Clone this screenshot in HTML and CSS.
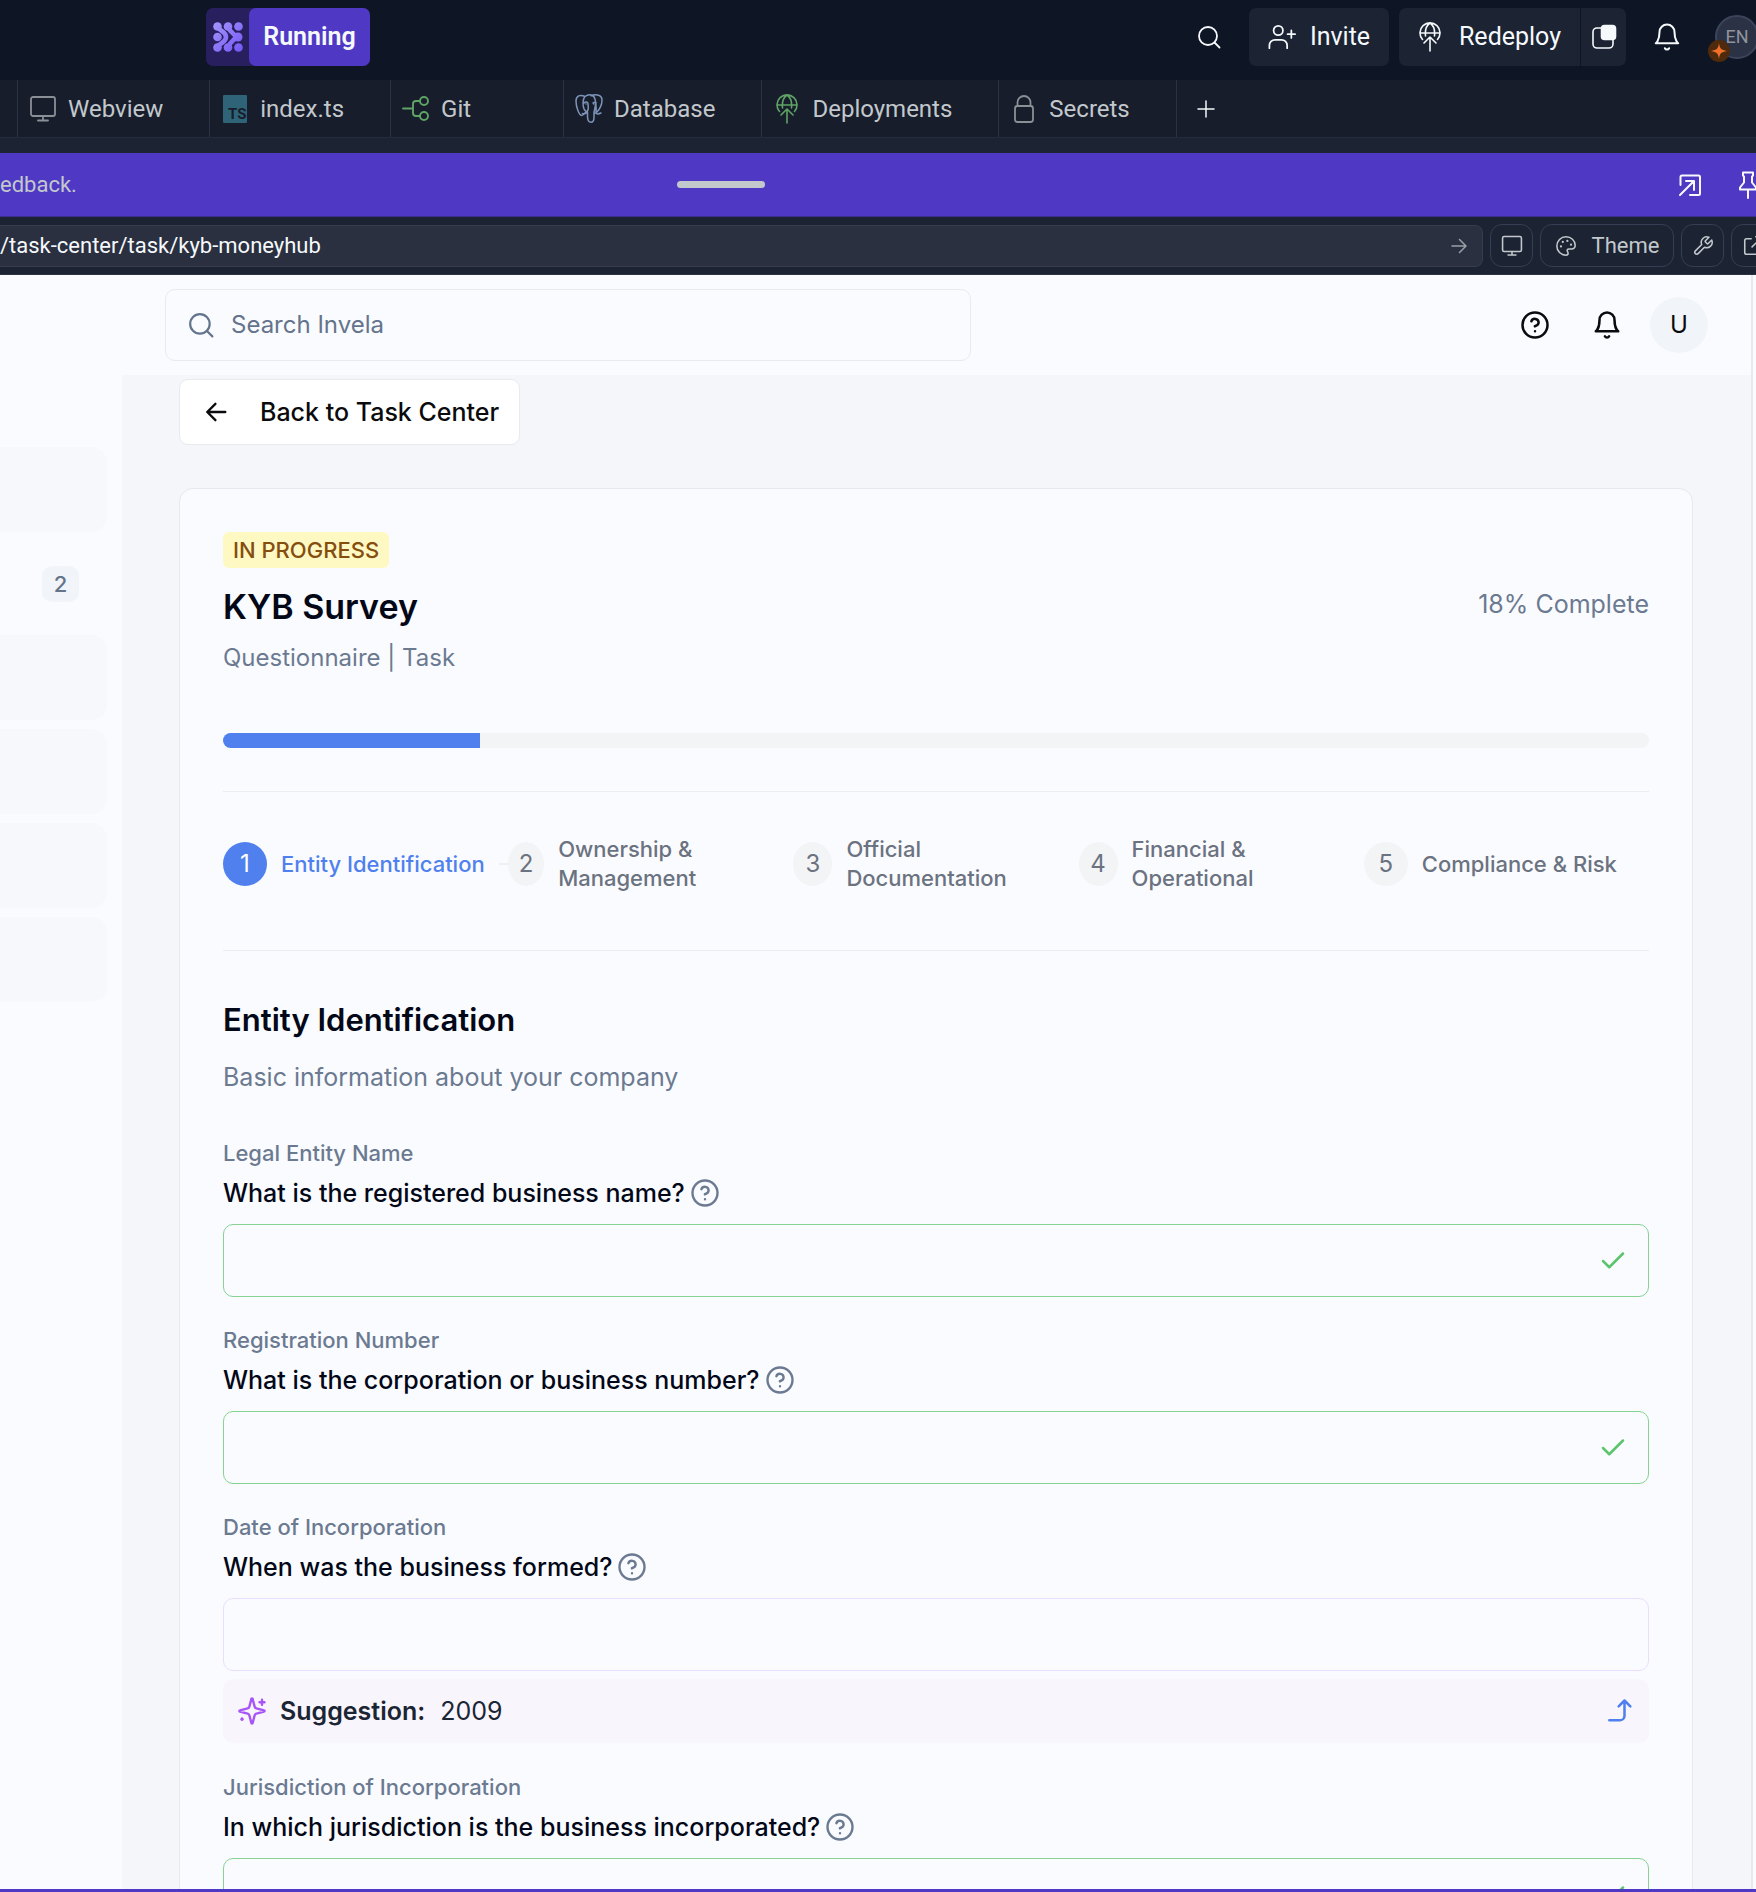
FILE: index.html
```html
<!DOCTYPE html>
<html lang="en">
<head>
<meta charset="utf-8">
<title>KYB Survey</title>
<link rel="stylesheet" href="styles.css">
</head>
<body>
<svg class="sprite" aria-hidden="true">
  <symbol id="i-search" viewBox="0 0 24 24"><circle cx="11" cy="11" r="9"/><path d="m17.5 17.5 5 5"/></symbol>
  <symbol id="i-help" viewBox="0 0 24 24"><circle cx="12" cy="12" r="10"/><path d="M9.1 9a3 3 0 0 1 5.8 1c0 2-3 3-3 3M12 17h.01"/></symbol>
  <symbol id="i-bell" viewBox="0 0 24 24"><path d="M6 8a6 6 0 0 1 12 0c0 7 3 9 3 9H3s3-2 3-9M10.3 21a1.9 1.9 0 0 0 3.4 0"/></symbol>
  <symbol id="i-monitor" viewBox="0 0 28 28"><rect x="2" y="2" width="24" height="19" rx="2"/><path d="M14 21v4.500M9 25.500h10"/></symbol>
  <symbol id="i-globe" viewBox="0 0 24 30"><path d="M4.500 17.500A10 10 0 1 1 19.500 17.500M2 11h20M12 1C7.500 4 7 9 7.500 14M12 1c4.500 3 5 8 4.500 13M12 29V15M6 21l6-6 6 6"/></symbol>
  <symbol id="i-check" viewBox="0 0 24 24"><path d="M20 6 9 17l-5-5"/></symbol>
</svg>
<div class="app">
  <header class="topbar">
    <button class="run" type="button">
      <span class="run-logo"><svg viewBox="0 0 30 30" width="30" height="30"><defs><linearGradient id="lg" gradientUnits="userSpaceOnUse" x1="0" y1="0" x2="30" y2="30"><stop offset="0" stop-color="#a596fb"/><stop offset="1" stop-color="#7355f6"/></linearGradient></defs><g fill="url(#lg)"><circle cx="4.500" cy="4.500" r="4.300"/><circle cx="15" cy="4.500" r="4.300"/><circle cx="25.500" cy="4.500" r="4.300"/><circle cx="4.500" cy="15" r="4.300"/><circle cx="25" cy="15" r="4.500"/><circle cx="4.500" cy="25.500" r="4.300"/><circle cx="15" cy="25.500" r="4.300"/><circle cx="25.500" cy="25.500" r="4.300"/></g><g fill="none" stroke="url(#lg)" stroke-width="4.600" stroke-linejoin="round"><path d="M5 5.500C8 10 13 9.500 13 15S8 20 5 24.500"/><path d="M15.500 5.500C17.500 11 20 10 23 15 20 20 17.500 19 15.500 24.500"/></g></svg></span>
      <span class="run-label">Running</span>
    </button>
    <div class="top-actions">
      <button class="icon-btn" type="button" aria-label="Search"><svg class="ic" width="24" height="24" stroke-width="1.800"><use href="#i-search"/></svg></button>
      <button class="top-btn invite" type="button"><svg class="ic" viewBox="0 0 30 28" width="28" height="28" stroke-width="1.900"><circle cx="11" cy="7" r="5"/><path d="M1.500 26v-3a6 6 0 0 1 6-6h7a6 6 0 0 1 6 6v3M25 7v8M21 11h8"/></svg>Invite</button>
      <div class="split">
        <button class="top-btn" type="button"><svg class="ic" width="24" height="30" stroke-width="1.600"><use href="#i-globe"/></svg>Redeploy</button>
        <button class="top-btn pages" type="button" aria-label="Deployment panel"><svg class="ic" viewBox="0 0 26 26" width="26" height="26" stroke-width="1.600"><path d="M10 4H6a4 4 0 0 0-4 4v12a4 4 0 0 0 4 4h12a4 4 0 0 0 4-4v-4"/><rect x="10.500" y="1.500" width="14" height="14" rx="3" fill="currentColor"/></svg></button>
      </div>
      <button class="icon-btn bell" type="button" aria-label="Notifications"><svg class="ic" width="30" height="30" stroke-width="1.600"><use href="#i-bell"/></svg></button>
      <div class="user"><span class="user-pic">EN</span><span class="user-star"><svg viewBox="0 0 16 16" width="16" height="16" fill="#f0702b"><path d="M8 0c.8 5.500 2 7 8 8-6 1-7.200 2.500-8 8-.8-5.500-2-7-8-8 6-1 7.200-2.500 8-8z"/></svg></span></div>
    </div>
  </header>

  <nav class="tabs" aria-label="Workspace tabs">
    <span class="tab-edge"></span>
    <button class="tab" type="button"><svg class="ic gray" width="28" height="28" stroke-width="1.800"><use href="#i-monitor"/></svg>Webview</button>
    <button class="tab" type="button"><svg viewBox="0 0 28 28" width="28" height="28"><rect x="2" y="0" width="24" height="28" rx="1" fill="#2f6478"/><text x="7" y="24" class="ts">TS</text></svg>index.ts</button>
    <button class="tab" type="button"><svg class="ic green" viewBox="0 0 28 28" width="28" height="28" stroke-width="1.900"><circle cx="22" cy="6" r="4"/><circle cx="22" cy="21" r="4"/><path d="M1 13.500h10M18 6h-4a3 3 0 0 0-3 3v9a3 3 0 0 0 3 3h4"/></svg>Git</button>
    <button class="tab" type="button"><svg class="ic slate" viewBox="0 0 28 30" width="28" height="30" stroke-width="1.500"><path d="M10 2.500C5 0 1 2 1 7c0 6 3 14 5.500 14.500 1.500 0 4-3 4-3M10 2.500c4-3 9-2 10 2.500 1.500 5 0 9-1 13v5c0 7-6 7-6.500 0v-5C9 17 8 13 8 9c0-3 .5-5 2-6.500zM16 1.800c5-2 11-1 11 4.200 0 5-3 10-5.500 12.500M20 19c2 1.500 4 1 6 0M9 9c2-2 4-1 4 1s1 4-.5 7c-1 3-3.500 3-5 2.500M18 9c1-1 2-1 3-.5-.5 3 .5 5 0 9M11 10h.01M18.500 10h.01"/></svg>Database</button>
    <button class="tab" type="button"><svg class="ic green" width="28" height="30" stroke-width="1.600"><use href="#i-globe"/></svg>Deployments</button>
    <button class="tab" type="button"><svg class="ic gray" viewBox="0 0 28 30" width="28" height="30" stroke-width="1.800"><rect x="5" y="12" width="18" height="16" rx="2.500"/><path d="M7.500 12V8.500a6.500 6.500 0 0 1 13 0V12"/></svg>Secrets</button>
    <button class="tab-add" type="button" aria-label="New tab"><svg class="ic" viewBox="0 0 18 18" width="18" height="18" stroke-width="1.500"><path d="M9 1v16M1 9h16"/></svg></button>
  </nav>

  <div class="banner">
    <span class="banner-text">edback.</span>
    <span class="handle"></span>
    <div class="banner-actions">
      <button class="icon-btn" type="button" aria-label="Open"><svg class="ic" viewBox="0 0 24 24" width="24" height="24" stroke-width="2"><path d="M2.500 12V4a1.500 1.500 0 0 1 1.500-1.500h16.500A1.500 1.500 0 0 1 22 4v16.500a1.500 1.500 0 0 1-1.500 1.500H12M2 22 16 8M8 8h8v9"/></svg></button>
      <button class="icon-btn pin" type="button" aria-label="Pin"><svg class="ic" viewBox="0 0 20 28" width="20" height="28" stroke-width="2"><path d="M5 1.500h10v3l-1 1v6l4 5v2H2v-2l4-5v-6l-1-1zM10 19v8"/></svg></button>
    </div>
  </div>

  <div class="urlbar">
    <div class="url-box">
      <input class="url" type="text" aria-label="Address" value="/task-center/task/kyb-moneyhub">
      <svg class="ic" viewBox="0 0 16 16" width="16" height="16" stroke-width="1.500"><path d="M1 8h14M8.500 1.500 15 8l-6.500 6.500"/></svg>
    </div>
    <button class="tool" type="button" aria-label="Device"><svg class="ic" width="22" height="22" stroke-width="2"><use href="#i-monitor"/></svg></button>
    <button class="tool theme" type="button"><svg class="ic" viewBox="0 0 24 24" width="22" height="22" stroke-width="1.700"><path d="M12 2a10 10 0 1 0 0 20c1.600 0 2.300-1 2.300-2 0-1.400-1-1.700-1-3 0-1 .8-1.700 2-1.700h2.500c2.500 0 4.200-1.800 4.200-4C22 6 17.500 2 12 2z"/><path d="M13.500 6.500h.01M17.500 10.500h.01M8.500 7.500h.01M6.500 12.500h.01" stroke-width="2.400"/></svg>Theme</button>
    <button class="tool" type="button" aria-label="Developer tools"><svg class="ic" viewBox="0 0 24 24" width="22" height="22" stroke-width="1.700"><path d="M14.700 6.300a1 1 0 0 0 0 1.400l1.600 1.600a1 1 0 0 0 1.400 0l3.800-3.800a6 6 0 0 1-7.900 7.900l-6.900 6.900a2.100 2.100 0 0 1-3-3l6.900-6.900a6 6 0 0 1 7.900-7.900z"/></svg></button>
    <button class="tool last" type="button" aria-label="Open in new window"><svg class="ic" viewBox="0 0 24 24" width="22" height="22" stroke-width="1.700"><path d="M20 14v5a2 2 0 0 1-2 2H5a2 2 0 0 1-2-2V6a2 2 0 0 1 2-2h5M15 2h7v7M11 13 22 2"/></svg></button>
  </div>

  <div class="webview">
    <aside class="sidebar">
      <div class="side-item"></div>
      <div class="side-item active"><span class="count">2</span></div>
      <div class="side-item"></div>
      <div class="side-item"></div>
      <div class="side-item"></div>
      <div class="side-item"></div>
    </aside>
    <div class="page">
      <div class="page-head">
        <label class="search"><svg class="ic" width="26" height="26" stroke-width="2"><use href="#i-search"/></svg><input type="search" aria-label="Search Invela" placeholder="Search Invela"></label>
        <div class="head-actions">
          <button class="icon-btn" type="button" aria-label="Help"><svg class="ic" width="30" height="30" stroke-width="2"><use href="#i-help"/></svg></button>
          <button class="icon-btn" type="button" aria-label="Notifications"><svg class="ic" width="30" height="30" stroke-width="2"><use href="#i-bell"/></svg></button>
          <span class="avatar">U</span>
        </div>
      </div>
      <main class="main">
        <button class="back" type="button"><svg class="ic" viewBox="0 0 24 24" width="28" height="28" stroke-width="2"><path d="m11.500 19-7-7 7-7M20 12H4.500"/></svg>Back to Task Center</button>
        <section class="card">
          <span class="status">IN PROGRESS</span>
          <div class="title-row"><h1>KYB Survey</h1><span class="complete">18% Complete</span></div>
          <p class="kind">Questionnaire | Task</p>
          <div class="progress"><div class="progress-fill" style="width:18%"></div></div>
          <ol class="steps">
            <li class="step current"><span class="dot">1</span><span class="step-name">Entity Identification</span><span class="link-line"></span></li>
            <li class="step tight"><span class="dot">2</span><span class="step-name">Ownership &amp;<br>Management</span></li>
            <li class="step snug"><span class="dot">3</span><span class="step-name">Official<br>Documentation</span></li>
            <li class="step snug"><span class="dot">4</span><span class="step-name">Financial &amp;<br>Operational</span></li>
            <li class="step"><span class="dot">5</span><span class="step-name">Compliance &amp; Risk</span></li>
          </ol>
          <h2>Entity Identification</h2>
          <p class="intro">Basic information about your company</p>
          <form class="fields">
            <div class="field">
              <span class="topic">Legal Entity Name</span>
              <div class="ask"><label for="f1">What is the registered business name?</label><button class="tip" type="button" aria-label="More about this question"><svg class="ic" width="30" height="30" stroke-width="1.900"><use href="#i-help"/></svg></button></div>
              <div class="box valid"><input id="f1" type="text"><svg class="ic" width="30" height="30" stroke-width="2"><use href="#i-check"/></svg></div>
            </div>
            <div class="field">
              <span class="topic">Registration Number</span>
              <div class="ask"><label for="f2">What is the corporation or business number?</label><button class="tip" type="button" aria-label="More about this question"><svg class="ic" width="30" height="30" stroke-width="1.900"><use href="#i-help"/></svg></button></div>
              <div class="box valid"><input id="f2" type="text"><svg class="ic" width="30" height="30" stroke-width="2"><use href="#i-check"/></svg></div>
            </div>
            <div class="field">
              <span class="topic">Date of Incorporation</span>
              <div class="ask"><label for="f3">When was the business formed?</label><button class="tip" type="button" aria-label="More about this question"><svg class="ic" width="30" height="30" stroke-width="1.900"><use href="#i-help"/></svg></button></div>
              <div class="box"><input id="f3" type="text"></div>
              <div class="suggestion">
                <svg class="ic purple" viewBox="0 0 24 24" width="30" height="30" stroke-width="1.900"><path d="M9.900 15.500A2 2 0 0 0 8.500 14.100l-6.100-1.600a.5.5 0 0 1 0-1l6.100-1.600A2 2 0 0 0 9.900 8.500l1.600-6.100a.5.500 0 0 1 1 0l1.600 6.100a2 2 0 0 0 1.400 1.400l6.100 1.600a.5.5 0 0 1 0 1l-6.100 1.600a2 2 0 0 0-1.400 1.400l-1.600 6.100a.5.5 0 0 1-1 0zM20 3v4M22 5h-4M4 18v1M4.500 18.500h-1"/></svg>
                <strong>Suggestion:</strong><span>2009</span>
                <button class="apply" type="button" aria-label="Use suggestion"><svg class="ic" viewBox="0 0 24 24" width="28" height="28" stroke-width="2.200"><path d="m10 8 5-5 5 5M15 3v13a4 4 0 0 1-4 4H2"/></svg></button>
              </div>
            </div>
            <div class="field">
              <span class="topic">Jurisdiction of Incorporation</span>
              <div class="ask"><label for="f4">In which jurisdiction is the business incorporated?</label><button class="tip" type="button" aria-label="More about this question"><svg class="ic" width="30" height="30" stroke-width="1.900"><use href="#i-help"/></svg></button></div>
              <div class="box valid"><input id="f4" type="text"><svg class="ic" width="30" height="30" stroke-width="2"><use href="#i-check"/></svg></div>
            </div>
          </form>
        </section>
      </main>
    </div>
  </div>
</div>
</body>
</html>
```
FILE: styles.css
```css
* { box-sizing: border-box; }
body { margin: 0; background: #0e1525; }
button, input { font: inherit; color: inherit; }
button { background: none; border: 0; padding: 0; cursor: pointer; }
input { border: 0; background: none; outline: 0; padding: 0; min-width: 0; }
svg { display: block; flex: none; }
.sprite { position: absolute; width: 0; height: 0; }
.ic { fill: none; stroke: currentColor; stroke-linecap: round; stroke-linejoin: round; }
.gray { color: #8b8f96; }
.green { color: #5fa465; }
.slate { color: #7d94b8; }

.app {
  display: flex;
  flex-direction: column;
  height: 100vh;
  overflow: hidden;
  font: 24px/30px Roboto, "Noto Sans", sans-serif;
  color: #f5f9fc;
  border-bottom: 3px solid #4f39c4;
}

/* Top bar */
.topbar { display: flex; flex: none; justify-content: space-between; height: 80px; padding: 8px 0 14px 206px; font-size: 25px; }
.run { display: flex; width: 164px; background: #271f5e; border-radius: 7px; }
.run-logo { display: flex; width: 43px; align-self: stretch; align-items: center; justify-content: center; }
.run-label { display: flex; flex: 1; align-self: stretch; align-items: center; justify-content: center; background: #4f39c4; border-radius: 7px; font-weight: 600; }
.top-actions { display: flex; align-items: center; }
.icon-btn { display: flex; align-items: center; justify-content: center; }
.top-btn { display: flex; height: 58px; align-items: center; justify-content: center; gap: 17px; background: #1c2333; border-radius: 7px; }
.invite { width: 140px; gap: 14px; margin: 0 10px 0 28px; }
.split { display: flex; gap: 1px; }
.split .top-btn { width: 181px; border-radius: 7px 0 0 7px; }
.split .pages { width: 45px; border-radius: 0 7px 7px 0; }
.bell { margin: 0 33px 0 26px; }
.user { position: relative; width: 41px; height: 44px; }
.user-pic { display: flex; width: 44px; height: 44px; align-items: center; justify-content: center; background: #2b3245; border: 2px solid #3c445c; border-radius: 50%; color: #8f949d; font-size: 18px; }
.user-star { position: absolute; left: -7px; top: 25px; display: flex; width: 22px; height: 22px; align-items: center; justify-content: center; border-radius: 50%; background: #4f2a0c; }

/* Tabs */
.tabs { display: flex; flex: none; height: 58px; background: #171d2b; border-bottom: 1px solid #252c3d; color: #c2c8cc; }
.tab-edge { width: 18px; border-right: 1px solid #2b3245; }
.tab { display: flex; align-items: center; gap: 11px; min-width: 173px; padding: 0 46px 0 11px; border-right: 1px solid #2b3245; white-space: nowrap; }
.tab-add { padding: 0 20px; color: #f5f9fc; }
.ts { font: 700 15px Roboto, sans-serif; fill: #171d2b; }

/* Banner */
.banner { display: grid; flex: none; grid-template-columns: 677px 88px 1fr; align-items: center; height: 64px; margin-top: 15px; background: #4f39c4; color: #c2c8cc; box-shadow: 0 -15px #1c2333; border-bottom: 1px solid #3a2e8e; overflow: clip; overflow-clip-margin: 15px; }
.banner-text { font-size: 22px; }
.handle { height: 7px; border-radius: 4px; background: #c2c8cc; }
.banner-actions { display: flex; justify-content: flex-end; gap: 36px; color: #f5f9fc; }
.pin { margin-right: -2px; }

/* Address row */
.urlbar { display: flex; flex: none; align-items: center; gap: 7px; height: 58px; background: #1c2333; border-bottom: 1px solid #2b3245; color: #c2c8cc; font-size: 22px; overflow: hidden; }
.url-box { display: flex; flex: 1; height: 42px; align-items: center; padding-right: 15px; background: #2b3040; border: 1px solid #363c4e; border-left: 0; border-radius: 0 8px 8px 0; color: #9a9fa8; }
.url { flex: 1; color: #f5f9fc; }
.tool { display: flex; flex: none; width: 43px; height: 43px; align-items: center; justify-content: center; gap: 15px; border: 1px solid #363e54; border-radius: 12px; }
.theme { width: 134px; }
.last { margin-right: -18px; }

/* Web page */
.webview { display: flex; flex: 1; min-height: 0; background: #fafbff; color: #020817; font-family: Inter, "Noto Sans", sans-serif; overflow: hidden; }
.sidebar { display: flex; flex: none; flex-direction: column; gap: 9px; width: 122px; padding: 172px 15px 0 0; }
.side-item { flex: none; height: 85px; border-radius: 0 16px 16px 0; background: #f7f8fc; }
.side-item.active { display: flex; align-items: center; justify-content: flex-end; padding-right: 28px; background: none; }
.count { width: 37px; height: 36px; border-radius: 10px; background: #f1f5f9; color: #64748b; font-size: 22px; font-weight: 500; line-height: 36px; text-align: center; }
.page { display: flex; flex: 1; flex-direction: column; min-width: 0; margin-right: 3px; border-right: 2px solid #e8e9ed; }
.page-head { display: flex; flex: none; align-items: center; justify-content: space-between; height: 100px; padding: 0 43px; }
.search { display: flex; width: 806px; height: 72px; align-items: center; gap: 17px; padding: 0 22px; border: 1px solid #e8eaee; border-radius: 10px; color: #64748b; }
.search input { flex: 1; }
.search input::placeholder { color: #64748b; opacity: 1; }
.head-actions { display: flex; align-items: center; gap: 42px; color: #0b0b0d; }
.avatar { width: 58px; height: 56px; margin-left: -14px; border-radius: 50%; background: #f1f5f9; font-size: 24px; line-height: 56px; text-align: center; }
.main { flex: 1; min-height: 0; padding: 4px 58px 0 57px; background: #f5f6fa; overflow: hidden; }
.back { display: flex; height: 66px; align-items: center; gap: 30px; padding: 0 20px 0 22px; background: #fff; border: 1px solid #e8eaee; border-radius: 9px; color: #0b0b0d; font-size: 25px; font-weight: 500; }
.card { margin-top: 43px; padding: 43px 43px 0; background: #fafbff; border: 1px solid #e5e8ee; border-radius: 14px 14px 0 0; }
.status { display: inline-block; padding: 0 10px; border-radius: 6px; background: #fef9c3; color: #854d0e; font-size: 22px; font-weight: 500; line-height: 36px; vertical-align: top; }
.title-row { display: flex; align-items: center; justify-content: space-between; margin-top: 14px; }
h1 { margin: 0; font-size: 34px; font-weight: 600; line-height: 50px; }
.complete { color: #6b7a90; font-size: 25px; padding-bottom: 6px; }
.kind, .intro { margin: 0; color: #6b7a90; line-height: 36px; }
.kind { margin-top: 8px; }
.progress { height: 15px; margin-top: 57px; border-radius: 8px; background: #f3f4f6; overflow: hidden; }
.progress-fill { height: 100%; background: #4f80ee; }
.steps { display: grid; grid-template-columns: repeat(5, 1fr); height: 160px; margin: 43px 0 0; padding: 0 0 14px; list-style: none; border-top: 1px solid #ebedf1; border-bottom: 1px solid #ebedf1; color: #6b7280; }
.step { display: flex; align-items: center; gap: 14px; min-width: 0; }
.dot { flex: none; width: 44px; height: 44px; border-radius: 50%; background: #f3f4f6; line-height: 44px; text-align: center; }
.snug .dot { width: 39px; }
.tight .dot { width: 36px; }
.step-name { font-size: 22px; font-weight: 500; line-height: 29px; white-space: nowrap; }
.current { color: #4f80ee; }
.current .dot { background: #4f80ee; color: #fff; }
.link-line { flex: 1; height: 2px; background: #eef0f3; }
h2 { margin: 48px 0 0; font-size: 31px; font-weight: 600; line-height: 42px; }
.intro { margin-top: 18px; font-size: 25px; }
.fields { display: flex; flex-direction: column; gap: 30px; margin-top: 44px; font-size: 25px; }
.topic { display: block; color: #6b7a90; font-size: 22px; font-weight: 500; line-height: 28px; }
.ask { display: flex; height: 36px; align-items: center; gap: 5px; margin-top: 8px; font-weight: 500; }
.tip { color: #6b7a90; }
.box { display: flex; height: 73px; align-items: center; margin-top: 13px; padding: 0 20px; border: 1px solid #e9defc; border-radius: 10px; }
.box input { flex: 1; align-self: stretch; }
.valid { border-color: #86d392; color: #5cc46c; }
.field .suggestion { margin-top: 8px; }
.field + .field { margin-top: -1px; }
.field:last-child { margin-top: 0; }
.suggestion { display: flex; height: 64px; align-items: center; padding: 0 14px; border-radius: 10px; background: #f8f5fd; color: #1b2533; }
.suggestion strong { margin: 0 15px 0 13px; font-weight: 600; }
.purple { color: #a855f7; }
.apply { margin-left: auto; color: #4f80ee; }
```
